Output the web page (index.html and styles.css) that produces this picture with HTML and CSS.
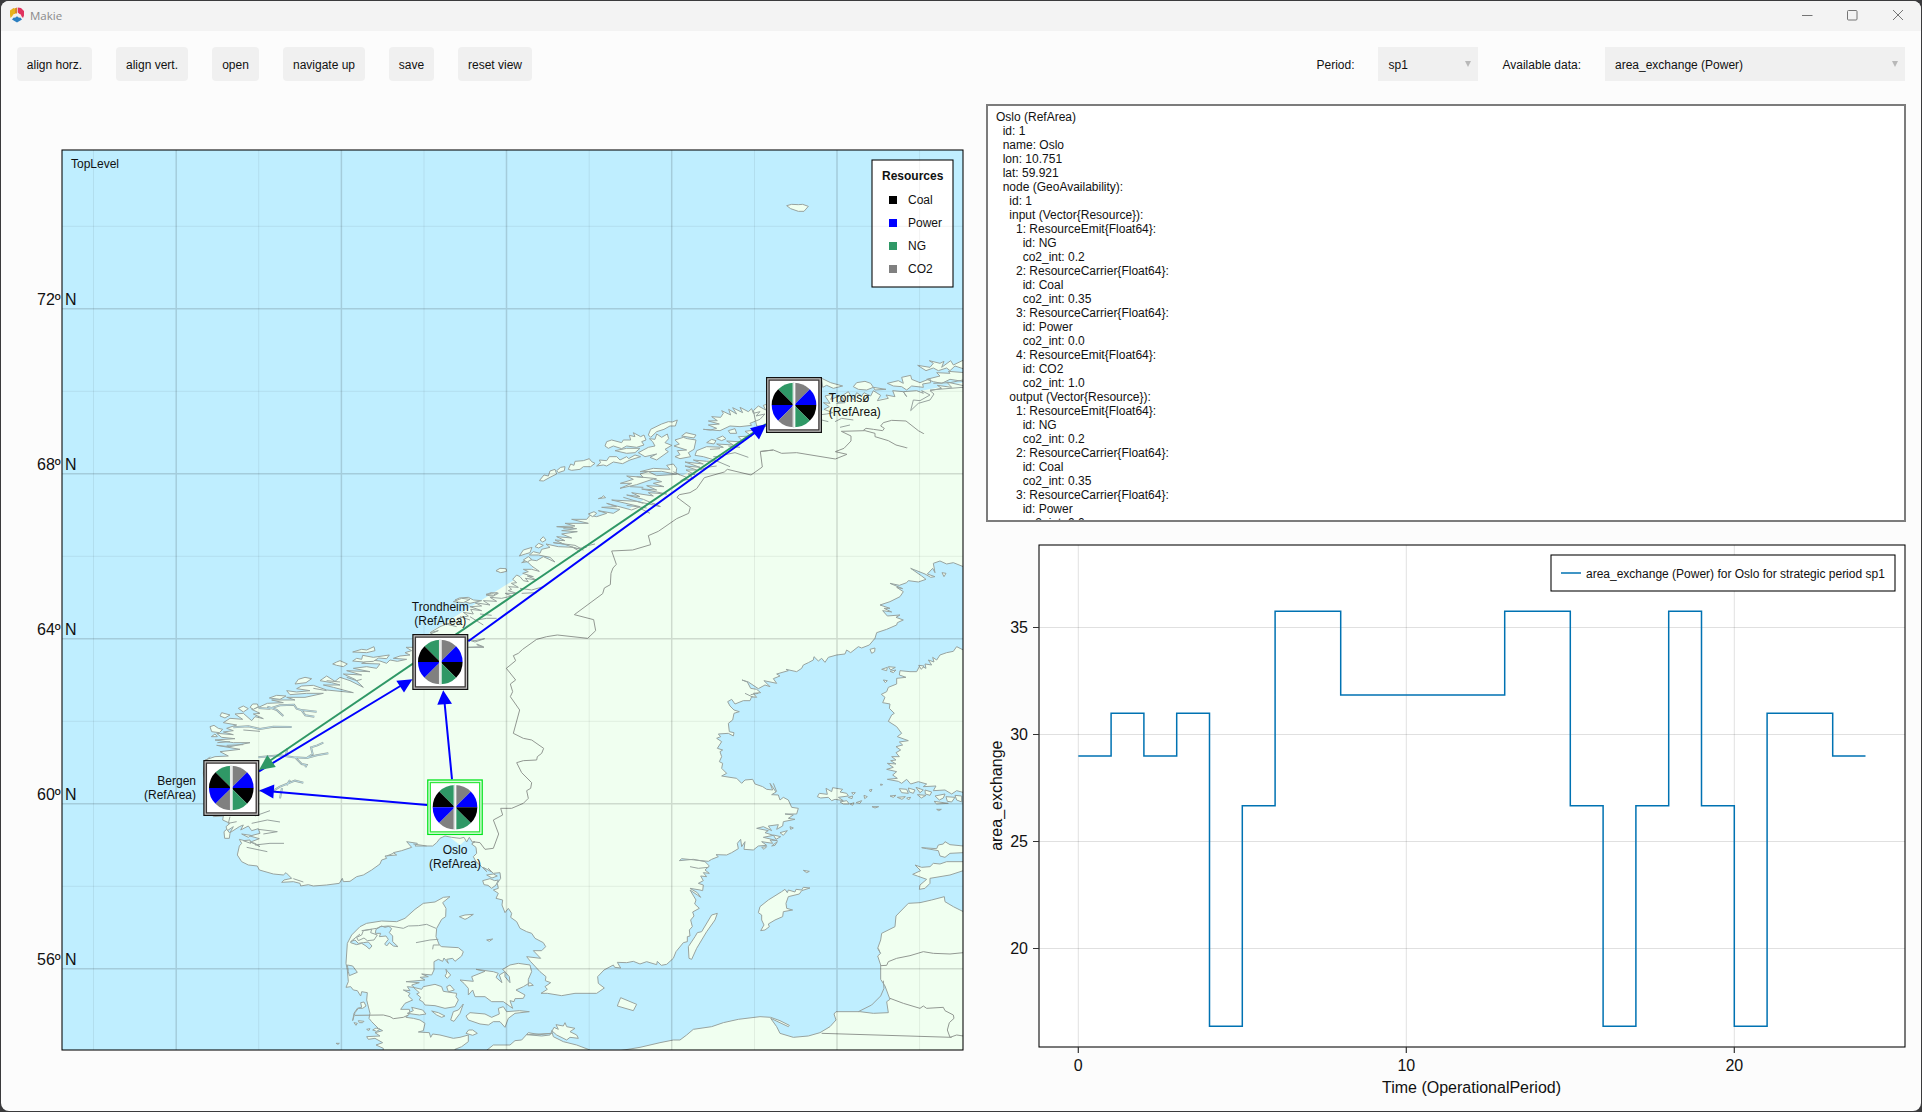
FILE: index.html
```html
<!DOCTYPE html>
<html lang="en">
<head>
<meta charset="utf-8">
<title>Makie</title>
<link rel="stylesheet" href="styles.css">
</head>
<body>
<div class="window">
  <header class="titlebar">
    <svg class="logo" width="16" height="16" viewBox="0 0 16 16">
      <path d="M1 3.500 4.500 1l1.500.5v5L1.500 11 1 8Z" fill="#e8b21c"/>
      <path d="M6 1.200 8 .5v6L6 6.500Z" fill="#d8892a"/>
      <path d="M8.700.5 12 1l3 3v4.500l-1 2.500-4-4.500-1.300-1Z" fill="#e0335f"/>
      <path d="M3 12.500 5.500 9.500h5l2.500 3L8 15.600Z" fill="#2c7fc0"/>
      <circle cx="5.600" cy="8.800" r="1.900" fill="#f4efe8"/><circle cx="10.400" cy="8.800" r="1.900" fill="#f4efe8"/>
    </svg>
    <span class="title">Makie</span>
    <svg class="controls" width="102" height="12" viewBox="0 0 102 12">
      <path d="M0 6.500h10.500"/><rect x="45.500" y="1.500" width="9.500" height="9.500" rx="1"/><path d="m91 1 10 10M101 1 91 11"/>
    </svg>
  </header>
  <nav class="toolbar">
    <button class="btn w75">align horz.</button>
    <button class="btn w72">align vert.</button>
    <button class="btn w47">open</button>
    <button class="btn w82">navigate up</button>
    <button class="btn w45">save</button>
    <button class="btn w74">reset view</button>
    <span class="spacer"></span>
    <span class="label">Period:</span>
    <div class="select period"><span>sp1</span><i class="caret"></i></div>
    <span class="label">Available data:</span>
    <div class="select data"><span>area_exchange (Power)</span><i class="caret"></i></div>
  </nav>
  <main class="content">
    <svg class="map" width="953" height="980" viewBox="17 104 953 980">
      <defs>
        <clipPath id="frame"><rect x="62" y="150" width="901" height="900"/></clipPath>
        <g id="pie">
          <path fill="#2f9866" d="M0 0V-22.300A22.300 22.300 0 0 0-15.800-15.800Z"/>
          <path fill="#000" d="M0 0-15.800-15.800A22.300 22.300 0 0 0-22.300 0Z"/>
          <path fill="#00f" d="M0 0H-22.300A22.300 22.300 0 0 0-15.800 15.800Z"/>
          <path fill="#808080" d="M0 0-15.800 15.800A22.300 22.300 0 0 0 0 22.300Z"/>
          <path fill="#808080" d="M0 0V-22.300A22.300 22.300 0 0 1 15.800-15.800Z"/>
          <path fill="#00f" d="M0 0 15.800-15.800A22.300 22.300 0 0 1 22.300 0Z"/>
          <path fill="#000" d="M0 0H22.300A22.300 22.300 0 0 1 15.800 15.800Z"/>
          <path fill="#2f9866" d="M0 0 15.800 15.800A22.300 22.300 0 0 1 0 22.300Z"/>
          <path d="M0-22.800V22.800" stroke="#fff" stroke-width="2.700"/>
          <path d="M-.3-22.600V22.600" stroke="#b9c4be" stroke-width=".7"/>
        </g>
        <g id="area">
          <rect x="-27.400" y="-27.400" width="54.800" height="54.800" fill="#c4c2c1" stroke="#111" stroke-width="1.200"/>
          <rect x="-24.900" y="-24.900" width="49.800" height="49.800" fill="#fff" stroke="#3a3636" stroke-width="1.300"/>
          <use href="#pie"/>
        </g>
        <g id="fjords">
          <path d="M235 592 300 586 340 592 380 594 398 582 393 562 412 556 430 548M380 594 410 586 445 580M345 592 365 612 380 615 376 622M318 585 322 565"/>
          <path d="M236 692 280 692 300 680 345 662 370 668M300 715 306 684M320 676 330 660"/>
          <path d="M236 444 268 446 300 436 342 434 350 446 364 450 376 466 403 470M364 450 410 455M262 440 290 450 310 468"/>
          <path d="M160 502 205 499 240 507 280 500 335 501"/>
        </g>
      </defs>
      <g clip-path="url(#frame)">
        <rect x="62" y="150" width="901" height="900" fill="#bfeeff"/>
        <path fill="#f0fff0" d="M425 640 430 632 766 424 820 411 966 382V400L460 845 400 800Z"/>

        <!-- northern Norway -->
        <g class="coast" transform="translate(440 360) scale(.33333)">
          <path d="M-30 818 0 800 20 792 45 785 60 790 52 775 85 768 70 757 100 762 92 748 125 752 90 740 125 738 105 728 150 735 130 722 170 724 150 712 185 715 215 708 195 700 230 700 205 692 215 688 206 680 235 682 214 670 230 668 218 658 230 645 240 650 250 662 265 665 256 655 290 660 262 648 280 650 248 640 265 635 250 628 275 628 298 634 275 618 262 605 245 608 262 598 290 602 310 590 345 606 330 592 295 585 268 585 280 575 300 580 305 568 330 562 318 552 355 560 400 562 430 570 405 556 340 548 370 552 345 540 375 542 350 530 395 534 365 522 412 515 365 512 410 506 350 500 405 498 375 490 445 490 395 478 440 478 450 466 470 470 500 460 475 452 520 460 540 448 485 442 530 440 500 430 575 450 600 440 515 420 590 424 640 435 660 440 610 418 560 405 600 410 575 398 640 408 625 398 680 402 605 387 650 390 620 377 672 380 640 370 665 365 640 357 590 374 540 385 575 370 541 370 580 358 560 348 610 352 600 342 625 335 650 347 710 343 665 334 600 335 640 325 690 328 680 316 700 312 710 325 708 340 740 352 722 362 760 356 745 342 765 344 738 330 770 330 735 318 780 322 735 306 790 312 760 300 800 304 830 302 790 290 765 286 770 272 800 260 850 262 830 252 880 255 860 243 910 246 895 230 935 228 915 214 960 208 977 195"/>
          <path d="M298 362 312 345 325 348 330 333 345 328 350 342 330 352 310 363ZM355 338 350 332 362 322 375 320 373 332ZM385 328 392 312 402 316 405 304 430 302 448 296 455 305 465 310 452 320 430 320 420 328 395 331ZM470 318 482 308 478 300 500 302 508 290 530 290 540 300 560 290 566 296 585 285 602 290 570 300 548 311 520 306 500 318 490 315ZM495 258 500 245 515 240 545 248 550 240 572 240 568 226 585 230 580 218 602 230 612 225 618 240 605 245 612 255 590 262 560 258 545 266 520 258 505 265ZM525 272 560 265 600 265 585 278 560 280ZM595 278 625 262 645 258 638 245 628 236 645 238 650 222 665 232 682 222 686 236 675 248 695 256 675 268 685 275 650 300 630 292 650 282 615 290ZM625 225 632 208 665 192 685 185 697 186 712 180 706 198 690 198 672 208 650 215 632 232ZM705 290 720 284 712 272 740 270 702 258 718 252 705 240 730 232 742 236 768 240 762 268 745 278 752 290 720 296ZM725 228 738 218 768 225 762 234Z"/>
          <path d="M790 208 812 210 830 205 805 195 838 192 805 183 832 182 815 170 842 172 850 160 845 152 872 165 866 148 890 162 878 143 908 158 900 142 925 155 935 146 940 160 960 155 948 168 975 162 960 178 930 190 935 196 900 200 870 198 840 212ZM940 152 955 138 977 150 970 136 990 130 985 200 950 198ZM800 248 815 238 828 242 822 252ZM830 236 848 228 858 236 845 242ZM865 212 885 206 890 220 870 220ZM475 416 486 412 490 407 497 413ZM300 540 310 530 318 540 308 546ZM285 560 296 550 310 556 296 564ZM238 588 250 570 276 562 270 578 256 582ZM170 633 182 626 200 630 186 638ZM138 705 152 698 175 700 158 709ZM45 720 58 714 85 712 100 720 125 722 90 730 70 724ZM445 462 462 455 470 460 458 470ZM250 600 265 590 275 598 262 606Z"/>
          <path class="inlet" d="M395 560 420 575M430 560 465 552M820 290 850 290M850 285 885 278 925 292M830 303 870 320M560 436 620 444M600 445 630 460M640 430 662 440M755 350 750 362M240 685 275 690 310 680M245 700 290 698M110 780 140 775 170 775M90 770 130 795M84 838 105 842 134 836M84 862 130 860 110 852M60 770 90 780M120 762 155 766M590 350 650 356M570 380 610 382M550 412 610 430M360 548 410 566 440 562M370 505 400 502M780 330 800 322 830 318M700 335 720 345M810 268 840 266M865 258 900 262"/>
          <path class="border" d="M248 868 290 838 320 830 352 825 443 835 467 812 461 779 403 764 488 701 493 684 511 674 513 640 519 624 529 613 515 573 578 570 632 554 625 527 655 514 710 476 746 460 751 442 711 412 718 404 750 398 770 386 793 353 853 336 862 328 933 345 967 321 961 275 1000 270"/>
        </g>

        <!-- Troms and Finnmark -->
        <g class="coast" transform="translate(640 340) scale(.33333)">
          <path d="M535 225 560 222 578 218 552 208 568 200 550 188 570 190 555 168 580 162 572 178 600 168 612 178 590 190 615 188 605 168 625 155 640 180 650 158 665 168 672 158 692 168 700 152 722 166 712 182 745 175 738 165 765 170 758 152 790 155 800 170 790 155 830 152 850 160 845 152 870 165 840 182 820 180 812 212 835 190 870 180 882 162 870 152 905 145 892 136 935 142 920 126 975 138"/>
          <path d="M640 140 650 128 675 124 692 130 700 142 680 150 655 148ZM742 130 775 122 790 130 785 112 812 106 815 118 840 128 870 116 872 128 848 132 850 142 815 138 800 150 785 140 760 138ZM833 76 870 82 880 70 868 62 900 70 912 64 905 82 932 62 940 75 975 58V88L945 78 930 92 920 84 895 92 880 84 858 92ZM860 118 900 108 890 98 930 100 925 94 975 98V125L930 118 905 130 880 125ZM545 115 572 128 608 138 580 145 560 136 548 142ZM700 142 738 148 705 150Z"/>
          <path class="inlet" d="M870 150 969 142M880 130 930 128 969 120M585 245 605 235 640 240M600 262 630 255M545 240 565 245"/>
          <path class="border" d="M361 334 400 330 425 340 470 338 586 357 621 343 586 335 612 325 633 303 633 288 604 274 675 272 705 280 705 290 745 302 768 315 795 322 850 342 910 347 940 352 975 364M670 271 678 265 700 268 728 272 733 265 722 258 730 248 755 241 798 243 835 272 885 300 888 312 920 317 975 317"/>
        </g>

        <!-- western and southern Norway -->
        <g class="coast" transform="translate(180 560) scale(.33333)">
          <path d="M750 218 775 212 720 235 700 262 678 262 695 272 675 278 690 285 660 288 640 295 680 298 652 304 630 300 620 310 600 303 570 300 545 310 600 312 590 325 560 320 520 325 570 335 500 332 545 345 490 342 525 358 550 382 510 362 480 352 465 364 440 348 420 362 455 368 480 375 430 375 460 382 520 398 440 390 400 376 365 378 350 386 390 392 350 396 320 392 330 404 380 400 430 400 375 412 320 412 345 420 275 420 310 428 262 430 240 440 215 448 240 460 220 462 250 476 225 470 215 482 190 460 165 462 188 478 150 475 130 488 170 495 140 505 160 512 130 516 160 524 110 520 125 532 165 536 105 540 160 548 210 548 150 560 110 556 180 568 120 575 145 588 105 590 75 600 70 640 100 770 130 768 128 780 150 790 138 800 142 812 160 800 150 818 178 800 190 795 182 810 205 798 215 812 235 806 240 820 210 828 238 836 212 846 240 860 225 850 178 838 185 850 178 858 172 885 185 905 205 915 232 918 238 930 280 942 310 945 318 938 335 955 312 960 305 967 340 965 360 970 362 978 385 974 400 978 440 975 478 970 487 955 490 965 510 964 530 950 550 945 575 930 600 912 605 900 620 895 615 888 650 885 640 878 665 872 695 862 680 845 712 850 705 858 758 858 770 848 780 835 795 828 815 832 840 835"/>
          <path d="M518 303 530 295 545 298 548 286 580 292 628 285 620 296 596 294 580 304 550 306ZM518 276 545 268 560 270 582 260 585 272 560 278ZM458 312 470 306 480 302 502 312 490 320 470 316ZM345 372 355 358 375 352 395 356 378 368ZM268 414 290 406 318 408 300 418ZM90 500 102 496 115 505 128 508 118 518 95 515ZM120 468 125 458 150 465 135 474ZM175 445 190 438 205 446 190 456ZM210 442 218 432 232 432 235 440 220 448ZM132 815 140 808 150 820 148 835 134 835ZM94 530 105 522 112 530ZM185 822 212 826 205 832ZM190 842 210 840 212 850ZM948 32 960 25 978 26 980 34 962 38ZM918 103 935 100 952 98 940 106ZM820 125 845 115 870 118 850 128Z"/>
          <use class="fjord-edge" href="#fjords"/>
          <use class="fjord-water" href="#fjords"/>
          <path class="inlet" d="M225 768 270 752M215 790 262 780 300 786M235 808 292 815 250 822M225 855 270 850 312 850M200 862 262 875M112 548 150 545M90 590 80 600M150 770 145 790 170 785M866 240 885 246 914 236M866 262 912 262 890 254M790 190 830 200M740 858 700 852M620 888 640 880M370 966 340 956M500 352 530 362 545 358M440 362 480 366M400 385 440 392M190 510 240 514M140 556 190 554"/>
        </g>

        <!-- Sweden, Finland and the Baltic -->
        <g class="coast" transform="translate(460 560) scale(.33333)">
          <path d="M0 835 12 832 20 846 28 832 38 848 45 845 35 852 48 862 50 880 40 890 48 905 65 920 80 935 70 922 95 936 85 925 100 940 120 938 122 955 112 970 115 985 100 990 115 1000 108 1015 128 1020 126 1035 135 1058 145 1045 155 1060 152 1072 170 1085 180 1105 200 1115 215 1120 225 1135 250 1148 257 1160 245 1172 220 1172 242 1195 200 1190 212 1205 240 1235 258 1250 256 1262 272 1268 255 1280 262 1288 243 1300 262 1300 305 1307 345 1300 410 1300 433 1284 415 1270 413 1250 432 1230 460 1215 464 1222 482 1224 472 1207 500 1208 520 1204 540 1212 560 1205 590 1214 592 1204 604 1216 620 1213 640 1195 648 1175 670 1148 682 1145 682 1130 690 1128 688 1110 697 1100 692 1080 702 1068 698 1056 718 1045 704 1032 708 1020 690 990 712 1005 722 1012 712 998 690 985 720 990 728 992 730 975 715 970 730 962 722 948 740 950 730 938 748 940 735 930 748 918 735 905 700 898 658 902 665 896 745 904 755 898 775 890 768 884 800 885 815 878 835 866 832 850 842 838 845 860 855 845 852 868 880 870 895 858 920 856 905 845 938 850 930 840 952 842 910 832 940 826 915 818 925 812 890 805 910 800 935 812 925 798 955 794 950 808 968 798 970 785 1005 778 985 775 1000 765 975 762 1010 762 1015 745 995 742 985 720 970 712 960 720 955 705 935 704 948 696 930 670 938 690 920 688 908 680 885 672 878 658 855 660 845 670 830 655 810 652 785 648 800 640 785 625 788 610 778 605 785 590 780 575 788 570 772 565 785 545 770 535 782 530 775 522 805 520 820 528 822 518 808 515 805 490 818 480 822 460 838 455 822 450 810 438 803 425 815 418 825 432 850 422 870 422 875 410 890 412 880 400 902 398 890 388 872 385 862 366 846 360 865 366 895 386 915 375 930 380 912 362 950 370 940 356 960 348 950 342 985 332 978 328 1010 335 1025 325 1030 315 1045 308 1060 300 1062 290 1075 303 1085 295 1095 307 1105 292 1130 285 1155 282 1160 270 1172 278 1195 260 1205 264 1228 255 1245 235 1250 218 1280 208 1310 195 1312 188 1330 180 1308 172 1320 165 1282 168 1268 152 1295 156 1272 145 1290 145 1260 135 1290 125 1320 110 1330 95 1310 82 1328 86 1290 70 1318 76 1340 68 1345 62 1375 66 1398 58 1385 48 1352 25 1395 42 1412 52 1425 50 1402 42 1418 25 1425 38 1420 10 1440 3 1460 12 1480 8 1510 20 1530 20 1530-500"/>
          <path d="M1510 270 1490 260 1480 274 1460 278 1440 285 1430 300 1418 292 1422 306 1405 300 1415 315 1395 312 1398 325 1380 316 1370 335 1350 335 1320 332 1318 345 1338 352 1310 355 1310 372 1285 382 1280 395 1264 403 1275 412 1268 428 1290 432 1288 445 1303 460 1295 465 1285 484 1310 500 1325 520 1312 530 1345 542 1318 546 1328 555 1308 560 1322 570 1308 578 1318 590 1295 590 1308 600 1292 602 1308 612 1282 610 1300 622 1280 628 1310 635 1298 645 1312 655 1282 658 1315 664 1325 670 1340 658 1352 672 1375 665 1400 672 1390 680 1428 678 1420 692 1455 690 1475 702 1490 692 1520 700 1530 700V270"/>
          <path d="M1072 710 1078 700 1102 703 1098 685 1115 695 1118 683 1148 688 1140 696 1160 700 1165 708 1135 712 1150 722 1125 718 1115 722 1105 712 1082 714ZM1385 863 1430 866 1435 855 1450 852 1455 845 1470 854 1510 858V878L1470 880 1455 892 1440 888 1435 872 1400 866ZM1358 943 1382 932 1365 915 1385 922 1410 920 1420 910 1440 912 1460 905 1510 905V932L1470 945 1440 950 1410 955 1410 970 1395 985 1378 988 1380 975 1400 958 1372 948Z"/>
          <path d="M1530 1060 1510 1055 1480 1040 1455 1025 1453 1010 1415 1020 1380 1028 1345 1030 1308 1068 1305 1100 1265 1120 1262 1140 1253 1165 1262 1180 1253 1188 1262 1215 1262 1258 1275 1278 1285 1305 1290 1318 1280 1325 1285 1358 1240 1360 1200 1355 1128 1355 1122 1362 1128 1380 1110 1400 1080 1418 1045 1428 1000 1432 960 1420 950 1400 932 1375 985 1400 988 1396 960 1382 932 1372 900 1370 835 1378 790 1388 755 1400 700 1408 680 1425 660 1440 640 1440 600 1448 540 1462 480 1472V1530H1530Z"/>
          <path d="M475 1330 482 1313 530 1333 520 1352 472 1338ZM900 1040 925 1020 965 995 975 988 982 998 985 990 1005 996 1008 988 1025 990 1030 982 1050 984 1025 992 1018 1002 985 1010 978 1030 980 1045 998 1050 970 1055 968 1070 945 1080 925 1092 928 1100 915 1110 902 1112 912 1095 905 1080 905 1065 895 1058ZM685 1160 705 1130 712 1118 725 1115 755 1065 772 1060 765 1080 740 1115 710 1165 695 1198 687 1195ZM1030 931 1048 934 1040 938ZM68 962 90 956 104 962 115 960 108 975 95 985 84 976 72 974ZM80 945 100 942 112 948 96 954Z"/>
          <path d="M0 1260 40 1264 35 1250 75 1234 48 1228 100 1235 115 1240 108 1252 126 1268 118 1245 135 1235 135 1250 150 1268 148 1250 128 1228 150 1215 175 1210 210 1215 215 1235 205 1258 205 1278 220 1276 210 1268 190 1280 168 1290 195 1305 190 1315 165 1316 162 1325 150 1322 158 1345 130 1325 95 1325 75 1310 45 1310 38 1290 25 1305 25 1285 12 1270ZM18 1368 30 1358 75 1362 95 1372 118 1362 115 1345 130 1340 140 1355 178 1352 208 1355 165 1360 145 1375 135 1402 120 1385 100 1385 85 1395 60 1392 25 1380Z"/>
          <path d="M75 1475 100 1455 150 1455 165 1442 185 1440 205 1418 240 1424 275 1420 200 1424 245 1428 270 1425 282 1402 295 1408 288 1394 310 1398 315 1388 320 1400 345 1405 330 1415 350 1425 355 1435 330 1432 320 1440 290 1425 275 1412 280 1430 310 1445 350 1455 390 1470 400 1530H75"/>
          <path d="M1230 268 1245 264 1244 275 1235 280ZM1265 328 1282 322 1280 332ZM1285 320 1306 322 1292 330ZM1290 334 1308 330 1300 338ZM1270 360 1282 362 1276 368ZM1140 726 1160 722 1168 732 1150 732ZM1170 732 1182 728 1178 736ZM1188 728 1205 722 1200 730ZM1165 712 1178 708 1176 716ZM1212 706 1222 710 1214 716ZM1228 690 1236 688 1232 696ZM1175 698 1186 698 1180 704ZM1236 740 1256 740 1245 744ZM1290 708 1308 706 1300 712ZM1312 712 1336 710 1326 718ZM1318 686 1340 688 1345 700 1325 698ZM1345 684 1365 690 1360 700 1348 696ZM1368 682 1390 690 1380 698ZM1340 714 1352 712 1346 720ZM1372 704 1398 706 1384 714ZM1395 690 1415 696 1410 706 1396 702ZM1425 708 1455 702 1450 714 1438 720ZM1458 710 1485 712 1475 726 1462 724ZM1422 724 1465 730 1430 732ZM1485 706 1505 708V726L1490 720ZM1262 672 1268 674 1262 676ZM1430 748 1444 748 1436 752ZM1446 38 1458 40 1452 50ZM1376 316 1392 318 1384 328ZM905 862 920 860 912 868ZM935 858 952 845 945 856ZM990 800 1000 804 992 808ZM960 818 982 812 970 826ZM940 825 962 830 948 838Z"/>
          <path class="inlet" d="M690 920 715 925 745 922M1270 1262 1272 1285 1262 1308 1235 1335 1195 1355M1255 1165 1260 1178M855 400 880 412M872 404 895 400M940 670 950 695"/>
          <path class="border" d="M188 268 175 280 160 287 167 302 139 325 167 360 151 372 158 395 151 410 179 450 160 520 190 535 215 540 251 565 245 580 232 590 230 600 190 602 170 608 185 638 215 668 212 685 200 692 205 715 190 730 155 745 122 745 128 765 100 780 116 822 100 865 75 868 60 848 38 845M1262 1217 1280 1216 1285 1205 1310 1195 1350 1187 1390 1175 1420 1180 1470 1182 1510 1178M1290 1315 1330 1330 1380 1345 1390 1338 1400 1345 1450 1342 1455 1352 1480 1365 1482 1375 1468 1388 1462 1410 1470 1432 1490 1425 1510 1428M1085 1420 1475 1432"/>
        </g>

        <!-- Denmark -->
        <g class="coast" transform="translate(60 800) scale(.33333)">
          <path d="M968 770 970 745 948 735 968 728 945 715 925 718 920 710 960 708 945 698 968 692 955 685 935 665 927 655 930 640 920 600 922 578 905 575 902 588 892 572 880 570 872 560 858 562 865 545 862 510 858 490 862 430 875 405 900 380 920 370 965 363 1010 365 1035 355 1065 328 1090 310 1125 306 1150 292 1170 290 1148 308 1158 325 1157 350 1145 358 1130 385 1128 410 1138 435 1145 440 1195 443 1210 455 1205 468 1185 484 1178 475 1160 478 1165 490 1152 474 1148 484 1135 478 1122 485 1122 510 1115 525 1085 522 1105 530 1080 532 1095 540 1038 545 1078 548 1055 555 1062 562 1042 560 1050 572 1030 570 1050 580 1045 588 1058 600 1035 610 1022 628 1048 628 1050 640 1038 652 1060 655 1080 660 1095 670 1090 692 1075 696 1108 698 1112 712 1118 702 1140 705 1180 715 1200 712 1225 705 1225 725 1205 740 1185 748 1180 790"/>
          <path class="water" d="M872 425 885 420 895 430 910 428 925 426 936 438 928 447 918 438 905 430 890 434 872 428ZM948 388 962 380 985 378 995 386 988 398 998 408 998 425 1014 440 1000 438 988 428 980 438 974 432 985 418 978 408 958 410 962 400 946 400ZM862 495 878 498 892 517 868 527 865 515Z"/>
          <path d="M890 412 905 405 910 392 935 388 932 398 952 405 942 420 922 422 912 414 895 422ZM1060 562 1085 568 1090 560 1125 553 1145 560 1150 574 1190 580 1188 590 1195 600 1185 620 1155 625 1125 617 1095 615 1088 605 1078 600 1082 592 1070 582 1078 578ZM1160 560 1170 555 1183 570 1165 575ZM1172 660 1180 635 1195 630 1210 612 1200 640 1182 664ZM1042 640 1060 632 1055 622 1088 630 1098 642 1078 645ZM1115 633 1135 638 1155 648 1145 652 1130 645ZM1158 508 1163 515 1172 525 1162 535 1155 528 1160 520ZM1198 350 1215 345 1240 343 1222 355 1215 358ZM1280 420 1298 417 1288 424ZM878 662 882 640 892 625 905 622 902 608 912 606 918 618 908 625 895 625 885 638ZM882 668 892 670 888 676ZM895 662 912 664 908 668 898 668ZM920 688 930 686 926 692ZM938 690 948 684 960 688 950 694ZM1218 700 1226 690 1238 690 1252 700 1238 706ZM828 730 838 730 834 733Z"/>
          <path class="inlet" d="M872 425 900 402M905 392 950 385 965 378 975 382 990 378 1030 385 1045 378 1075 377 1100 373 1128 385M1068 428 1110 420 1135 418M1118 448 1120 435 1138 435"/>
          <path class="border" d="M885 646 970 645 990 650 1000 656 1030 652 1045 645"/>
        </g>

        <!-- Bear Island -->
        <g class="coast" transform="translate(720 140) scale(.33333)"><path d="M200 197 215 193 235 194 248 193 265 199 252 214 235 214 212 206Z"/></g>

        <g stroke="#000" stroke-opacity=".065">
          <path d="M93.500 150V1050M258.700 150V1050M424 150V1050M589.200 150V1050M754.500 150V1050M919.600 150V1050M62 226.300H963M62 391.300H963M62 556.300H963M62 721.300H963M62 886.300H963"/>
        </g>
        <g stroke="#000" stroke-opacity=".14" stroke-width="1.500">
          <path d="M176.200 150V1050M341.400 150V1050M506.500 150V1050M671.700 150V1050M837 150V1050M62 308.700H963M62 473.800H963M62 638.800H963M62 803.800H963M62 968.800H963"/>
        </g>
      </g>

      <g fill="none" stroke="#2f9866" stroke-width="2"><path d="M766 424 268 762"/></g>
      <g fill="none" stroke="#00f" stroke-width="2">
        <path d="M468.300 641.300 756 432M259 771.300 402 685M452 779.300 444.500 702M427.300 805 272 791.500"/>
      </g>
      <path fill="#2f9866" d="m259 770 8.300-15 8.500 12Z"/>
      <path fill="#00f" d="m766.300 424-16.300 4.300 9 11.200ZM412.500 679.200 396.300 680.800 404 692.500ZM443.200 690.200 437.300 704.800 452 703.700ZM259.200 790.400 274.300 784.500 273.300 798.500Z"/>
      <use href="#area" x="794" y="405"/>
      <use href="#area" x="440.300" y="662"/>
      <use href="#area" x="231.300" y="788"/>
      <g class="selected" transform="translate(455 807.200)">
        <rect x="-27.200" y="-27.200" width="54.400" height="54.400" fill="#fff" stroke="#00e41a" stroke-width="1.300"/>
        <rect x="-24.700" y="-24.700" width="49.400" height="49.400" fill="#fff" stroke="#35e83f" stroke-width="1.400"/>
        <use href="#pie"/>
      </g>

      <g class="t12">
        <text x="828.800" y="402.300">Tromsø</text><text x="828.800" y="416.200">(RefArea)</text>
        <text x="440.300" y="611.200" text-anchor="middle">Trondheim</text><text x="440.300" y="625.100" text-anchor="middle">(RefArea)</text>
        <text x="196" y="785.200" text-anchor="end">Bergen</text><text x="196" y="799.200" text-anchor="end">(RefArea)</text>
        <text x="455" y="853.600" text-anchor="middle">Oslo</text><text x="455" y="867.600" text-anchor="middle">(RefArea)</text>
        <text x="71" y="168.300">TopLevel</text>
      </g>

      <rect class="frame" x="62" y="150" width="901" height="900"/>
      <rect class="frame panel" x="872" y="160" width="81" height="127"/>
      <path d="M919.600 160V287M872 226.300H953" stroke="#000" stroke-opacity=".05"/>
      <g class="t12">
        <text x="912.700" y="179.600" text-anchor="middle" font-weight="700">Resources</text>
        <text x="908" y="204.400">Coal</text><text x="908" y="227.400">Power</text><text x="908" y="250.400">NG</text><text x="908" y="273.400">CO2</text>
      </g>
      <rect x="889" y="196" width="8" height="8" fill="#000"/>
      <rect x="889" y="219" width="8" height="8" fill="#00f"/>
      <rect x="889" y="242" width="8" height="8" fill="#2f9866"/>
      <rect x="889" y="265" width="8" height="8" fill="#808080"/>

      <g class="t16">
        <text x="37" y="305.300">72º N</text><text x="37" y="470.300">68º N</text><text x="37" y="635.300">64º N</text><text x="37" y="800.300">60º N</text><text x="37" y="965.300">56º N</text>
      </g>
    </svg>

    <section class="side">
<pre class="info">Oslo (RefArea)
  id: 1
  name: Oslo
  lon: 10.751
  lat: 59.921
  node (GeoAvailability):
    id: 1
    input (Vector{Resource}):
      1: ResourceEmit{Float64}:
        id: NG
        co2_int: 0.2
      2: ResourceCarrier{Float64}:
        id: Coal
        co2_int: 0.35
      3: ResourceCarrier{Float64}:
        id: Power
        co2_int: 0.0
      4: ResourceEmit{Float64}:
        id: CO2
        co2_int: 1.0
    output (Vector{Resource}):
      1: ResourceEmit{Float64}:
        id: NG
        co2_int: 0.2
      2: ResourceCarrier{Float64}:
        id: Coal
        co2_int: 0.35
      3: ResourceCarrier{Float64}:
        id: Power
        co2_int: 0.0</pre>
      <svg class="chart" width="925" height="570" viewBox="986 522 925 570">
        <rect x="1039" y="545" width="866" height="502" fill="#fff"/>
        <path d="M1078.300 545V1047M1406.300 545V1047M1734.300 545V1047M1039 627.500H1905M1039 734.500H1905M1039 841.500H1905M1039 948.500H1905" stroke="#000" stroke-opacity=".12" fill="none"/>
        <path class="series" d="M1078.300 756.100H1111.100V713.300H1143.900V756.100H1176.700V713.300H1209.500V1026.300H1242.300V805.800H1275.100V611.300H1340.700V694.900H1504.700V611.300H1570.300V805.800H1603.100V1026.300H1635.900V805.800H1668.700V611.300H1701.500V805.800H1734.300V1026.300H1767.100V713.300H1832.700V756.100H1865.500"/>
        <rect class="frame" x="1039" y="545" width="866" height="502"/>
        <path d="M1033 627.500H1039M1033 734.500H1039M1033 841.500H1039M1033 948.500H1039M1078.300 1047V1053M1406.300 1047V1053M1734.300 1047V1053" stroke="#333" stroke-width="1.200"/>
        <rect class="frame panel" x="1551" y="555" width="344" height="36"/>
        <path class="series" d="M1561 573H1581"/>
        <text class="t12" x="1586" y="577.500">area_exchange (Power) for Oslo for strategic period sp1</text>
        <g class="t16" text-anchor="end">
          <text x="1028" y="633.300">35</text><text x="1028" y="740.300">30</text><text x="1028" y="847.300">25</text><text x="1028" y="954.200">20</text>
        </g>
        <g class="t16" text-anchor="middle">
          <text x="1078.300" y="1071.300">0</text><text x="1406.300" y="1071.300">10</text><text x="1734.300" y="1071.300">20</text>
          <text x="1471.500" y="1092.600">Time (OperationalPeriod)</text>
          <text transform="translate(1002 795.700) rotate(-90)">area_exchange</text>
        </g>
      </svg>
    </section>
  </main>
</div>
</body>
</html>
```
FILE: styles.css
```css
* { box-sizing: border-box; }

body {
  margin: 0;
  padding: 1px;
  width: 1922px;
  height: 1112px;
  overflow: hidden;
  background: #3a3a3c;
  font-family: "Liberation Sans", Arial, sans-serif;
  font-size: 12px;
  color: #111;
}

.window {
  display: flex;
  flex-direction: column;
  width: 1920px;
  height: 1110px;
  overflow: hidden;
  border-radius: 8px;
  background: #fcfcfc;
}

.titlebar {
  display: flex;
  align-items: center;
  height: 30px;
  flex: none;
  padding: 0 17px 2px 8px;
  background: #f3f3f3;
}

.title {
  margin-left: 5px;
  font-family: "Open Sans", "Noto Sans", sans-serif;
  font-size: 11.5px;
  color: #8a8a8a;
}

.controls {
  margin-left: auto;
  fill: none;
  stroke: #757575;
  stroke-width: 1;
}

.toolbar {
  display: flex;
  align-items: center;
  flex: none;
  gap: 24px;
  height: 73px;
  padding: 16px 16px 23px;
}

.btn {
  height: 34px;
  padding: 1px 0 0;
  border: 0;
  border-radius: 4px;
  background: #f0f0f0;
  color: #111;
  font: inherit;
  white-space: nowrap;
}

.w75 { width: 75px; }
.w72 { width: 72px; }
.w47 { width: 47px; }
.w82 { width: 82px; }
.w45 { width: 45px; }
.w74 { width: 74px; }

.spacer { flex: 1; }

.label {
  padding-top: 1px;
  white-space: nowrap;
}

.select {
  display: flex;
  align-items: center;
  justify-content: space-between;
  height: 34px;
  padding: 1px 7px 0 10px;
  background: #f0f0f0;
}

.period { width: 100px; }
.data { width: 300px; }

.caret {
  margin-top: -2px;
  border: 3px solid transparent;
  border-top: 6px solid #b8b8b8;
  border-bottom: 0;
}

.content {
  display: grid;
  grid-template-columns: 953px 920px;
  gap: 16px;
  padding-left: 16px;
}

.map, .chart { display: block; overflow: visible; }

.side { display: flex; flex-direction: column; }

.info {
  height: 418px;
  margin: 0;
  padding: 4px 8px 0;
  overflow: hidden;
  border: 2px solid #7c7c7c;
  background: #fff;
  font: 12px/14px "Liberation Sans", Arial, sans-serif;
}

.coast path {
  fill: #f0fff0;
  stroke: #98a39f;
  stroke-width: 3;
  stroke-linejoin: round;
}

.coast .water { fill: #bfeeff; }

.coast .inlet,
.coast .border { fill: none; }

.coast .border { stroke: #929892; }

#fjords path { fill: none; stroke: inherit; stroke-width: inherit; }

.fjord-edge { stroke: #98a39f; stroke-width: 6; }
.fjord-water { stroke: #bfeeff; stroke-width: 2; }

.frame { fill: none; stroke: #000; stroke-width: 1.05; }
.panel { fill: #fff; }

.series { fill: none; stroke: #0072b2; stroke-width: 1.5; }

.t12, .t16 { font-family: "Liberation Sans", Arial, sans-serif; fill: #111; }
.t12 { font-size: 12px; }
.t16 { font-size: 16px; }
```
